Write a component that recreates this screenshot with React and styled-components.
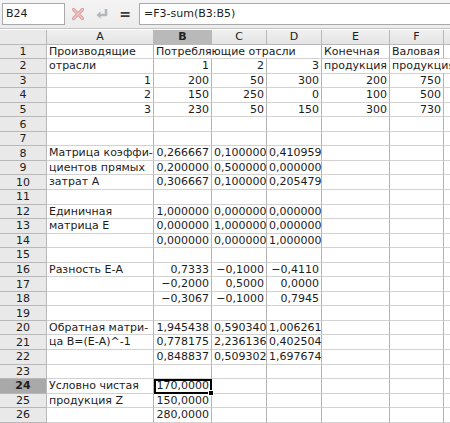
import React from 'react';
import styled, { createGlobalStyle } from 'styled-components';

const GlobalStyle = createGlobalStyle`
  html, body { margin: 0; padding: 0; background: #ffffff; }
  body { font-family: 'DejaVu Sans', 'Liberation Sans', sans-serif; font-size: 11px; color: #1c1c1c; }
`;

const COLS = ['A', 'B', 'C', 'D', 'E', 'F', 'G'];
const COL_WIDTHS = '47px 107px 58px 55px 55px 68px 54px 60px';
const ROW_H = 14.56;

// each row: [A, B, C, D, E, F]; null = empty, {t, span, align} for special cells
const txt = (t) => ({ t, align: 'left' });
const num = (t) => ({ t, align: 'right' });

const rows = [
  [txt('Производящие'), { t: 'Потребляющие отрасли', align: 'left', span: 3 }, txt('Конечная'), txt('Валовая')],
  [txt('отрасли'), num('1'), num('2'), num('3'), txt('продукция'), { t: 'продукция', align: 'left', span: 2 }],
  [num('1'), num('200'), num('50'), num('300'), num('200'), num('750')],
  [num('2'), num('150'), num('250'), num('0'), num('100'), num('500')],
  [num('3'), num('230'), num('50'), num('150'), num('300'), num('730')],
  [],
  [],
  [txt('Матрица коэффи-'), num('0,266667'), num('0,100000'), num('0,410959')],
  [txt('циентов прямых'), num('0,200000'), num('0,500000'), num('0,000000')],
  [txt('затрат А'), num('0,306667'), num('0,100000'), num('0,205479')],
  [],
  [txt('Единичная'), num('1,000000'), num('0,000000'), num('0,000000')],
  [txt('матрица Е'), num('0,000000'), num('1,000000'), num('0,000000')],
  [null, num('0,000000'), num('0,000000'), num('1,000000')],
  [],
  [txt('Разность Е-А'), num('0,7333'), num('−0,1000'), num('−0,4110')],
  [null, num('−0,2000'), num('0,5000'), num('0,0000')],
  [null, num('−0,3067'), num('−0,1000'), num('0,7945')],
  [],
  [txt('Обратная матри-'), num('1,945438'), num('0,590340'), num('1,006261')],
  [txt('ца В=(Е-А)^-1'), num('0,778175'), num('2,236136'), num('0,402504')],
  [null, num('0,848837'), num('0,509302'), num('1,697674')],
  [],
  [txt('Условно чистая'), num('170,0000')],
  [txt('продукция Z'), num('150,0000')],
  [null, num('280,0000')],
];

const SELECTED_ROW = 24;
const SELECTED_COL = 'B';

const App = () => {
  return (
    <>
      <GlobalStyle />
      <Window>
        <FormulaBar>
          <NameBox>B24</NameBox>
          <ToolIcon title="Отменить">
            <svg width="14" height="14" viewBox="0 0 14 14">
              <path d="M2.5 2.5 L11.5 11.5 M11.5 2.5 L2.5 11.5" stroke="#d9a0a0" strokeWidth="3.2" strokeLinecap="round" />
              <path d="M2.5 2.5 L11.5 11.5 M11.5 2.5 L2.5 11.5" stroke="#eec4c4" strokeWidth="1.4" strokeLinecap="round" />
            </svg>
          </ToolIcon>
          <ToolIcon title="Принять">
            <svg width="16" height="14" viewBox="0 0 16 14">
              <path d="M12 2 L12 8 L5 8" fill="none" stroke="#b4b8bc" strokeWidth="2.6" strokeLinejoin="round" />
              <path d="M6.5 4.2 L2.5 8 L6.5 11.8 Z" fill="#b4b8bc" />
            </svg>
          </ToolIcon>
          <EqualSign>=</EqualSign>
          <FormulaInput>=F3-sum(B3:B5)</FormulaInput>
        </FormulaBar>
        <Sheet>
          <Corner />
          {COLS.map((c) => (
            <ColHeader key={c} $active={c === SELECTED_COL}>{c}</ColHeader>
          ))}
          {rows.map((row, ri) => {
            const r = ri + 1;
            const cells = [];
            let ci = 0;
            let k = 0;
            while (ci < COLS.length) {
              const cell = row[k];
              k += 1;
              const span = cell && cell.span ? cell.span : 1;
              const col = COLS[ci];
              cells.push(
                <Cell
                  key={col}
                  $align={cell ? cell.align : 'left'}
                  $span={span}
                  $selected={r === SELECTED_ROW && col === SELECTED_COL}
                >
                  {cell ? cell.t : ''}
                </Cell>
              );
              ci += span;
            }
            return (
              <React.Fragment key={r}>
                <RowHeader $active={r === SELECTED_ROW}>{r}</RowHeader>
                {cells}
              </React.Fragment>
            );
          })}
        </Sheet>
      </Window>
    </>
  );
};

const Window = styled.div`
  width: 450px;
  height: 423px;
  overflow: hidden;
  background: #ffffff;
`;

const FormulaBar = styled.div`
  display: flex;
  align-items: center;
  height: 29px;
  padding: 0 0 0 2px;
  background: linear-gradient(#f4f4f4, #ececec);
  border-bottom: 1px solid #c4c4c4;
  box-sizing: border-box;
`;

const NameBox = styled.div`
  width: 63px;
  height: 22px;
  box-sizing: border-box;
  border: 1px solid #a9a9a9;
  background: #ffffff;
  padding: 0 3px;
  line-height: 20px;
  font-size: 11px;
`;

const ToolIcon = styled.div`
  width: 22px;
  height: 22px;
  display: flex;
  align-items: center;
  justify-content: center;
  margin-left: 2px;
`;

const EqualSign = styled.div`
  width: 24px;
  text-align: center;
  font-size: 14px;
  font-weight: bold;
  color: #3a3a3a;
`;

const FormulaInput = styled.div`
  flex: 1;
  height: 22px;
  box-sizing: border-box;
  border: 1px solid #a9a9a9;
  border-right: none;
  background: #ffffff;
  padding: 0 4px;
  line-height: 20px;
  font-size: 11px;
  margin-left: 2px;
`;

const Sheet = styled.div`
  display: grid;
  grid-template-columns: ${COL_WIDTHS};
  grid-auto-rows: ${ROW_H}px;
  margin-top: 1px;
`;

const HeaderBase = styled.div`
  box-sizing: border-box;
  border-right: 1px solid #b8b8b8;
  border-bottom: 1px solid #b8b8b8;
  display: flex;
  align-items: center;
  justify-content: center;
  line-height: 1;
  font-size: 11px;
  color: #202020;
  overflow: hidden;
`;

const Corner = styled(HeaderBase)`
  background: #e9e9e9;
`;

const ColHeader = styled(HeaderBase)`
  background: ${(p) => (p.$active ? '#b9b9b9' : 'linear-gradient(#f0f0f0, #e4e4e4)')};
  font-weight: ${(p) => (p.$active ? 'bold' : 'normal')};
`;

const RowHeader = styled(HeaderBase)`
  background: ${(p) => (p.$active ? '#a9a9a9' : '#e9e9e9')};
  font-weight: ${(p) => (p.$active ? 'bold' : 'normal')};
`;

const Cell = styled.div`
  position: relative;
  box-sizing: border-box;
  grid-column: span ${(p) => p.$span};
  border-right: 1px solid #b4b4b4;
  border-bottom: 1px solid #d2d2d2;
  padding: 0 2px;
  white-space: nowrap;
  overflow: visible;
  text-align: ${(p) => p.$align};
  line-height: ${ROW_H - 1}px;
  font-size: 11px;
  color: #1c1c1c;
  ${(p) =>
    p.$selected &&
    `
    outline: 2px solid #000000;
    outline-offset: -2px;
    z-index: 2;
    &::after {
      content: '';
      position: absolute;
      right: -3px;
      bottom: -3px;
      width: 4px;
      height: 4px;
      background: #000000;
      border: 1px solid #ffffff;
    }
  `}
`;

export default App;
